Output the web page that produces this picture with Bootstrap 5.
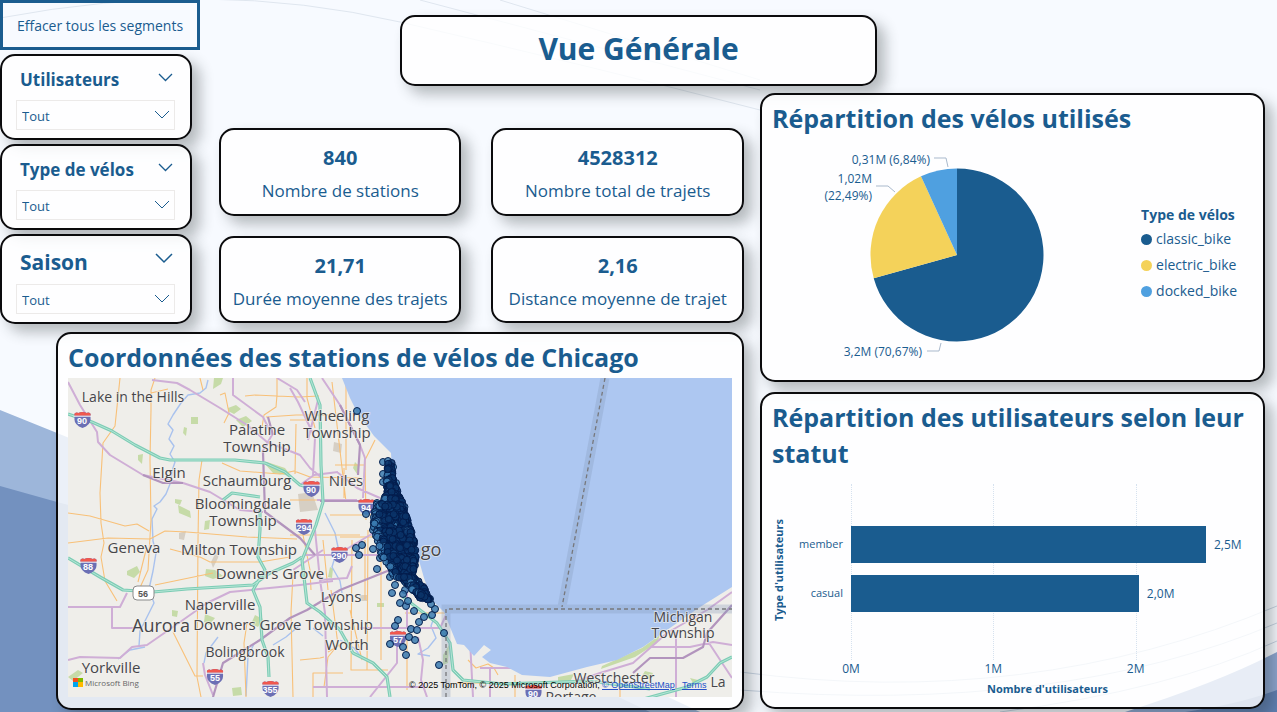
<!DOCTYPE html>
<html lang="fr">
<head>
<meta charset="utf-8">
<meta name="viewport" content="width=device-width, initial-scale=1">
<title>Vue Générale</title>
<link href="https://cdn.jsdelivr.net/npm/bootstrap@5.3.0/dist/css/bootstrap.min.css" rel="stylesheet">
<style>
  :root { --ink: #1a5c8f; }
  body { font-family: "Open Sans", "Noto Sans", sans-serif; color: var(--ink); background: #f7faff; }
  .backdrop { z-index: -1; }
  .dash { display: grid; min-height: 100vh;
    grid-template-columns: minmax(0, 200fr) minmax(0, 560fr) minmax(0, 517fr);
    grid-template-rows: 93px 234px 1fr; }
  .area-filters { grid-area: 1 / 1 / 3 / 2; }
  .area-title { grid-area: 1 / 2 / 2 / 4; display: grid; grid-template-columns: 200fr 477fr 400fr; padding: 15px 0 7px; }
  .area-title > h1 { grid-column: 2; font-size: 30px; }
  .area-kpi { grid-area: 2 / 2 / 3 / 3; display: grid; grid-template-columns: 242fr 252fr; gap: 20px 30px; padding: 35px 16px 4px 19px; }
  .area-map { grid-area: 3 / 1 / 4 / 3; padding: 5px 16px 2px 56px; }
  .area-charts { grid-area: 2 / 3 / 4 / 4; padding: 0 12px 3px 0; gap: 10px; }
  .panel { border: 2px solid #0b0b0d; border-radius: 15px; background: rgba(255,255,255,.8); box-shadow: 8px 8px 14px rgba(40,50,50,.32); }
  .panel h2 { font-size: 25px; line-height: 36px; }
  .btn-clear { --bs-btn-hover-color: var(--ink); --bs-btn-hover-border-color: var(--ink); --bs-btn-active-border-color: var(--ink);
    height: 50px; border: 3px solid var(--ink); border-radius: 0; color: var(--ink); font-size: 14px; padding: 0; }
  .slicer { margin-right: 8px; padding: 8px 15px 8px 14px; }
  .slicer label { font-size: 17px; line-height: 32px; }
  .slicer.season label { font-size: 21px; line-height: 36px; }
  .fold { border: 0; background: none; padding: 0 2px 6px 0; line-height: 0; color: var(--ink); }
  .slicer .form-select { height: 30px; border: 1px solid #eceae9; border-radius: 0; font-size: 13px; line-height: 22px; padding: 4px 24px 2px 5px; color: var(--ink); background-color: transparent;
    background-image: url("data:image/svg+xml,%3Csvg xmlns='http://www.w3.org/2000/svg' viewBox='0 0 16 16'%3E%3Cpath d='M1 4l7 7 7-7' fill='none' stroke='%231a5c8f'/%3E%3C/svg%3E"); background-position: right 4px center; background-size: 16px 16px; }
  .kpi { padding-top: 6px; }
  .kpi b { font-size: 20px; line-height: 28px; }
  .kpi span { font-size: 17px; line-height: 28px; padding-top: 5px; }
  .panel-chart { padding: 5px 10px; }
  .pie-panel { min-height: 289px; }
  .pie-row { padding-top: 3px; }
  .pie-svg { width: 332px; height: 220px; }
  .pie-svg text { font-size: 12px; fill: var(--ink); text-anchor: end; }
  .legend-box { font-size: 14px; line-height: 20px; margin-top: 14px; }
  .legend-box li { margin-bottom: 6px; }
  .swatch { width: 11px; height: 11px; border-radius: 50%; }
  .c-classic { background: #1a5c8f; } .c-electric { background: #f4d25a; } .c-docked { background: #4fa0e0; }
  .bar-chart { padding-top: 13px; }
  .ytitle { writing-mode: vertical-rl; transform: rotate(180deg); font-size: 11px; line-height: 14px; padding-top: 24px; }
  .cats { width: 65px; padding: 42px 8px 0 0; font-size: 11px; }
  .cats div, .bar-row { height: 37px; margin-bottom: 12px; }
  .plot { padding-top: 42px; height: 176px; }
  .gridline { top: 0; bottom: 0; border-left: 1px dotted #d6e2ef; }
  .bar-fill { background: var(--ink); }
  .bar-row, .ticks { font-size: 12px; }
  .ticks { height: 20px; }
  .ticks span { transform: translateX(-50%); }
  .xtitle { font-size: 11px; line-height: 18px; padding-left: 70px; }
  .geo { display: block; width: 100%; margin-top: 3px; }
  .geo .place { font-size: 15px; fill: #46464a; text-anchor: middle; stroke: #f4f2ee; stroke-width: 2px; stroke-opacity: .6; paint-order: stroke; }
  .geo .place .city { font-size: 18px; }
  .geo .place .minor { font-size: 14px; }
  .geo .credit { font: 9px "Liberation Sans", sans-serif; }
  .geo a text { fill: #2450c8; text-decoration: underline; }
  .geo .shield text { font: bold 9px "Liberation Sans", sans-serif; fill: #fff; text-anchor: middle; }
  .geo .dot { fill: #3a7ab0; fill-opacity: .85; stroke: #06224f; stroke-width: 1; }
  .geo .dot.dense { fill: #0b3468; stroke: #031c4c; }
</style>
</head>
<body>
<svg class="backdrop position-absolute top-0 start-0 w-100 h-100" viewBox="0 0 1277 712" preserveAspectRatio="none" aria-hidden="true">
  <path d="M0 410L57 433Q400 570 700 712H0Z" fill="#9db6da"/>
  <path d="M0 486L57 502Q400 590 650 712H0Z" fill="#7391bf"/>
  <path d="M1125 712Q1220 682 1277 652V712Z" fill="#8ca6d0"/>
  <path d="M1185 712Q1240 704 1277 690V712Z" fill="#5f7fb2"/>
  <g fill="none" stroke-width="1">
    <path stroke="#dfe6ef" d="M0 18Q210-22 400 22T760 110M420 0L760 90M500 0L760 80"/>
    <path stroke="#c6d2e2" d="M740 672Q1030 710 1277 606M740 690Q1060 715 1277 623M1000 712Q1170 690 1277 641"/>
  </g>
</svg>

<main class="dash">
  <aside class="area-filters d-flex flex-column">
    <button type="button" class="btn btn-clear w-100 mb-1 flex-shrink-0">Effacer tous les segments</button>
    <div class="d-flex flex-column gap-1">
      <section class="panel slicer">
        <div class="d-flex justify-content-between align-items-center ps-1"><label for="f-user" class="fw-bold">Utilisateurs</label>
          <button type="button" class="fold" aria-label="Replier"><svg width="15" height="15" viewBox="0 0 15 15"><path d="M1 4l6.500 6.500L14 4" fill="none" stroke="currentColor" stroke-width="1.300"/></svg></button></div>
        <select id="f-user" class="form-select mt-1"><option>Tout</option></select>
      </section>
      <section class="panel slicer">
        <div class="d-flex justify-content-between align-items-center ps-1"><label for="f-type" class="fw-bold">Type de vélos</label>
          <button type="button" class="fold" aria-label="Replier"><svg width="15" height="15" viewBox="0 0 15 15"><path d="M1 4l6.500 6.500L14 4" fill="none" stroke="currentColor" stroke-width="1.300"/></svg></button></div>
        <select id="f-type" class="form-select mt-1"><option>Tout</option></select>
      </section>
      <section class="panel slicer season">
        <div class="d-flex justify-content-between align-items-center ps-1"><label for="f-season" class="fw-bold">Saison</label>
          <button type="button" class="fold" aria-label="Replier"><svg width="18" height="18" viewBox="0 0 18 18"><path d="M1 4l8 8 8-8" fill="none" stroke="currentColor" stroke-width="1.500"/></svg></button></div>
        <select id="f-season" class="form-select mt-1"><option>Tout</option></select>
      </section>
    </div>
  </aside>

  <header class="area-title">
    <h1 class="panel fw-bold m-0 pb-1 d-flex align-items-center justify-content-center">Vue Générale</h1>
  </header>

  <section class="area-kpi text-center">
    <div class="panel kpi d-flex flex-column justify-content-center"><b>840</b><span>Nombre de stations</span></div>
    <div class="panel kpi d-flex flex-column justify-content-center"><b>4528312</b><span>Nombre total de trajets</span></div>
    <div class="panel kpi d-flex flex-column justify-content-center"><b>21,71</b><span>Durée moyenne des trajets</span></div>
    <div class="panel kpi d-flex flex-column justify-content-center"><b>2,16</b><span>Distance moyenne de trajet</span></div>
  </section>

  <div class="area-map d-flex">
    <section class="panel panel-chart flex-fill">
      <h2 class="fw-bold m-0">Coordonnées des stations de vélos de Chicago</h2>
      <svg class="geo" viewBox="68 378 664 319" role="img" aria-label="Carte des stations">
        <defs>
          <symbol id="sh" viewBox="0 0 19 18"><path d="M1 3Q3 1 5 2Q9.500 0 14 2Q16 1 18 3V9Q18 15 9.500 18Q1 15 1 9Z" fill="#6b6fb4"/><path d="M1 3Q3 1 5 2Q9.500 0 14 2Q16 1 18 3V5H1Z" fill="#f0584e"/><path d="M0 5.500H19" stroke="#fff" stroke-width="1"/></symbol>
        </defs>
        <rect x="68" y="378" width="664" height="319" fill="#efeeea"/>
        <g fill="#c6dba8">
          <path d="M228 408l8-3 5 4-7 5-6-3zM236 420l10-4 6 5-9 6zM191 417h7v7h-7zM184 427l3 1-1 8-3-3zM138 455l5-1-1 10-4-4zM175 499l7 1-2 5-5-2zM178 505l12 6 1 7-12-5zM205 521l5-1-1 9-5 1zM127 571l10-5 3 6-6 6-7-3zM206 569l9 1 8 6-10 3-8-3zM172 610l6 1-1 6-5-1zM205 614l10 4-6 7-5-3zM68 677l10-7 5 3-10 8zM232 688l9-1 1 8-9 1zM214 378h9l-2 6-8 5zM267 462l18 6 6 8-18-3-8-9zM355 462l4 4-2 8-4-6zM363 378l-12 3 3 6zM377 603h7v4h-7zM255 615l8 4-5 8-7-3zM330 567l3 2-1 9-4-1zM602 666l40-18 18-13-3 8-22 14-34 12zM645 671l8 2-3 6-8-3zM690 678l8 2-5 3zM558 677l16-3-4 8-12-1zM443 655l6-10-1 18-5 2z"/>
        </g>
        <g fill="#d6cfc4"><path d="M179 533l7-2-2 9-5-1zM298 494l14-2 6 18-18 2zM360 595h7v6h-7zM334 442l8 2-1 9-8-2zM220 548l-2 10-5 10-2-6 6-12z"/></g>
        <!-- rivers -->
        <g fill="none" stroke="#a9c2ee" stroke-width="1.400" stroke-linejoin="round">
          <path d="M208 380l-2 8-6 5-12 2-7 8-8 12-5 9 5 6-4 9 5 7-4 8 5 8-2 6-3 16-4 10-6 8-6 4 3 3-5 10 1 22 3 12-3 18-4 18 5 14-4 8-10 20-1 15"/>
          <path d="M145 647l-15 3-12 9M218 637l-12 16-2 10M268 634l-14 10-6 12-2 40M300 625l-14 12-13 8M325 513l10 20 3 14-6 20 8 14 2 12M436 612l-5 14 5 12-8 10-10 6 12 2M313 628l10 8M340 640l14 8 8 10"/>
        </g>
        <!-- secondary roads -->
        <g fill="none" stroke="#f8c078" stroke-width="1.100" stroke-linejoin="round">
          <path d="M120 378l-5 48-12 17-3 50 1 30 3 20-3 14 4 24 12 20M155 378l-4 12v20l-1 50 1 60-3 50-10 22M151 393l17-4M200 378l3 12M220 395l5-2 4 20-5 10M202 460l-3 20-1 60-1 137 4 20M277 378v18M245 396l10-1 44 2 20-1M277 395l-1 12-12 8-2 12M266 417l30-2h36M222 463l18 8 40 3 14-3 16 6 50 1M68 513l22 3 35 10 12-2 12 7M68 543l40-5 42 1 15-8 22 1 60 5 50 2M146 550l-8 32M155 585l58-12M170 549l30 8 10 5h50l30-5M173 632l22 44h8M290 420h28M296 424l-1 50M346 385v85M332 382l14 120M335 465h30M344 468v30M290 535h70M330 515h60M323 540l5 50M340 537h38M368 530l-1 140M365 540v60M331 590l7 55-10 12-4 30M300 660l20-2 4-1M352 540l-1 130h37M348 640l-20 12M313 697v-24h30M405 613h40M457 683h50M515 675v22M620 685v12M676 632v15M690 615l10 8M468 660l8 8 12-4 6 4 4 7M247 623l-3 20 2 54M293 575l-2 37 2 85"/>
          <path d="M307 378v20l8 30M290 500h50M375 440l-10 20 1 60M381 500v160M300 520l10 50 1 20M350 610l12 50M407 640v50"/>
        </g>
        <!-- highways -->
        <g fill="none" stroke="#cfaed6" stroke-width="2" stroke-linejoin="round">
          <path d="M68 382l12 23 17 27 1 10 12 13 33 20 40 8 27 9 30 18 23 2M152 380l25 3 13 7 30 18 27 17 20 17 33 13 10 13 12 10M233 378v17l30 22 9 18-10 17M277 378l20 12 8 12M290 388l8 14 17 36-2 37M322 378l18 27 20 40 5 13-2 40M337 472l20 16 23 10M300 485l14-10 24-3M68 607h52l7-14M112 607v21h28M68 660l12-3 40 1 12-11 15-2 26-18 34-24 23-11 70-7 33-4M303 555h74M317 500h40M315 530l2 20 3 30 5 33 2 84M360 628h80M313 687h110M397 630v33l-27 34M407 563v64M418 637l5 23-2 20 6 17M447 613l-7 15M203 663l2 12 8 20M340 560l5-10 30-18M470 640l3 57M480 668h60M732 592l-25 18-40 23-34 30-33 10-26 9M676 632v65M650 647h40l23-5 19 3M707 640l25 38M490 668v29"/>
          <path d="M318 400l-10 40M320 580l27-2 5-12M293 570l30-20"/>
        </g>
        <g fill="none" stroke="#b294bd" stroke-width="2.200" stroke-linejoin="round">
          <path d="M143 475l20 8h20M263 452l2 60 35 26 15 17M390 570l-50 20-33 20-17 8-30 22-37 23-10 34M268 417l5 18M340 405l20 40-2 30M732 605l-25 28-4 14-20 11h-33l-17 15M320 501h45"/>
        </g>
        <g fill="none" stroke="#7dccb5" stroke-width="3.200" stroke-linejoin="round">
          <path id="teal" d="M68 414l24 8 20 9 23 14 25 13 10 2h65l30 3 20 9 15 13 11 3M310 378l10 27 1 60 2 37-7 23-14 35 5 43 13 9 20 18 13 23 20 10 14 14 3 20M68 558l32 19 23 13 30 2 34-3 33-2 33-2 17-12 23-10 9-6M260 497l-28-4-9 7M260 510v20l-2 27 7 13-12 20 7 17 2 33 6 17 1 20M380 545l30 40M403 597l17 13 17 13 13 20 3 27 10 10 40 4 87-3 60 8M640 700l47-13 20-10 13-14 12-6"/>
        </g>
        <use href="#teal" fill="none" stroke="#b5e6d6" stroke-width="1"/>
        <!-- Lake Michigan -->
        <path d="M342 378L350 398 358 414 374 436 391 453 392 470 400 492 408 520 416 550 424 578 432 600 444 612 450 627 457 644 464 645 474 656 484 645 491 650 482 657 490 663 507 667 522 675 550 677 587 667 617 660 643 647 667 630 700 607 732 587V378Z" fill="#adc7f1"/>
        <g fill="none">
          <path d="M446 697V609H732M605 378L562 607" stroke="#8498b8" stroke-opacity=".3" stroke-width="9"/>
          <path d="M446 697V609H732M605 378L562 607" stroke="#77787c" stroke-width="1.300" stroke-dasharray="4 3"/>
        </g>
        <g class="shield">
          <use href="#sh" x="73" y="411" width="19" height="17"/><text x="82" y="424">90</text>
          <use href="#sh" x="302" y="480" width="19" height="17"/><text x="311" y="493">90</text>
          <use href="#sh" x="357" y="498" width="19" height="17"/><text x="366" y="511">94</text>
          <use href="#sh" x="294" y="518" width="20" height="17"/><text x="304" y="531">294</text>
          <use href="#sh" x="330" y="546" width="19" height="17"/><text x="339" y="559">290</text>
          <use href="#sh" x="79" y="557" width="19" height="17"/><text x="88" y="570">88</text>
          <use href="#sh" x="389" y="630" width="18" height="17"/><text x="398" y="643">57</text>
          <use href="#sh" x="206" y="668" width="18" height="17"/><text x="215" y="681">55</text>
          <use href="#sh" x="261" y="680" width="19" height="17"/><text x="270" y="693">355</text>
          <use href="#sh" x="524" y="684" width="19" height="17"/><text x="533" y="697">90</text>
          <rect x="133" y="586" width="21" height="14" rx="4" fill="#fff" stroke="#8a8a8a"/><text x="143" y="597" style="fill:#555">56</text>
        </g>
        <g class="place">
          <text class="minor" x="133" y="402">Lake in the Hills</text>
          <text x="337" y="421">Wheeling</text><text x="337" y="438">Township</text>
          <text x="257" y="435">Palatine</text><text x="257" y="452">Township</text>
          <text x="169" y="478">Elgin</text><text x="247" y="486">Schaumburg</text><text x="346" y="486">Niles</text>
          <text x="243" y="509">Bloomingdale</text><text x="243" y="526">Township</text>
          <text x="134" y="553">Geneva</text><text x="239" y="555">Milton Township</text>
          <text x="270" y="579">Downers Grove</text><text x="341" y="602">Lyons</text>
          <text x="220" y="610">Naperville</text><text class="city" x="161" y="632">Aurora</text>
          <text x="283" y="630">Downers Grove Township</text>
          <text class="minor" x="245" y="657">Bolingbrook</text><text x="347" y="650">Worth</text>
          <text x="111" y="673">Yorkville</text><text class="city" x="431" y="556">go</text>
          <text class="minor" x="683" y="622">Michigan</text><text class="minor" x="683" y="638">Township</text>
          <text class="minor" x="614" y="683">Westchester</text><text class="minor" x="571" y="702">Portage</text><text class="minor" x="718" y="687">La</text>
        </g>
        <g id="stations"></g>
        <g><path d="M73 678h5v4h-5z" fill="#f25022"/><path d="M78 678h5v4h-5z" fill="#7fba00"/><path d="M73 682h5v5h-5z" fill="#00a4ef"/><path d="M78 682h5v5h-5z" fill="#ffb900"/></g>
        <text x="85" y="686" font-size="8" fill="#666">Microsoft Bing</text>
        <g class="credit">
          <text x="409" y="688">© 2025 TomTom, © 2025 Microsoft Corporation,</text>
          <a href="#osm"><text x="602" y="688">© OpenStreetMap</text></a>
          <a href="#terms"><text x="682" y="688">Terms</text></a>
        </g>
      </svg>
    </section>
  </div>

  <div class="area-charts d-flex flex-column">
    <section class="panel panel-chart pie-panel">
      <h2 class="fw-bold m-0">Répartition des vélos utilisés</h2>
      <div class="pie-row d-flex align-items-center justify-content-between pe-3">
        <svg class="pie-svg" viewBox="772 139 332 220" role="img" aria-label="Répartition des vélos">
          <path d="M957 255V168.500A86.500 86.500 0 1 1 873.700 278.300Z" fill="#1a5c8f"/>
          <path d="M957 255L873.700 278.300A86.500 86.500 0 0 1 921 176.300Z" fill="#f4d25a"/>
          <path d="M957 255L921 176.300A86.500 86.500 0 0 1 957 168.500Z" fill="#4fa0e0"/>
          <path d="M934 158h12l2 9M876 186h12l7 6M927 351h12l2-8" fill="none" stroke="#a9b9cc"/>
          <text x="930" y="164">0,31M (6,84%)</text>
          <text x="872" y="183">1,02M</text><text x="872" y="200">(22,49%)</text>
          <text x="922" y="356">3,2M (70,67%)</text>
        </svg>
        <div class="legend-box">
          <strong>Type de vélos</strong>
          <ul class="list-unstyled m-0 pt-1">
            <li class="d-flex align-items-center gap-1"><span class="swatch c-classic"></span>classic_bike</li>
            <li class="d-flex align-items-center gap-1"><span class="swatch c-electric"></span>electric_bike</li>
            <li class="d-flex align-items-center gap-1"><span class="swatch c-docked"></span>docked_bike</li>
          </ul>
        </div>
      </div>
    </section>
    <section class="panel panel-chart flex-fill">
      <h2 class="fw-bold m-0">Répartition des utilisateurs selon leur statut</h2>
      <div class="bar-chart d-flex">
        <div class="ytitle fw-bold text-center">Type d'utilisateurs</div>
        <div class="cats text-end">
          <div class="d-flex align-items-center justify-content-end">member</div>
          <div class="d-flex align-items-center justify-content-end">casual</div>
        </div>
        <div class="flex-fill">
          <div class="plot position-relative">
            <span class="gridline position-absolute" style="left:0%"></span>
            <span class="gridline position-absolute" style="left:35.4%"></span>
            <span class="gridline position-absolute" style="left:70.8%"></span>
            <div class="bar-row d-flex align-items-center position-relative"><span class="bar-fill h-100" style="width:88.3%"></span><span class="ps-2">2,5M</span></div>
            <div class="bar-row d-flex align-items-center position-relative"><span class="bar-fill h-100" style="width:71.6%"></span><span class="ps-2">2,0M</span></div>
          </div>
          <div class="ticks position-relative">
            <span class="position-absolute" style="left:0%">0M</span>
            <span class="position-absolute" style="left:35.4%">1M</span>
            <span class="position-absolute" style="left:70.8%">2M</span>
          </div>
        </div>
      </div>
      <div class="xtitle fw-bold text-center">Nombre d'utilisateurs</div>
    </section>
  </div>
</main>

<script src="https://cdn.jsdelivr.net/npm/bootstrap@5.3.0/dist/js/bootstrap.bundle.min.js"></script>
<script>
  // Outlying stations, one pair per station
  const outer = [[357,411],[383,462],[388,461],[391,466],[393,467],[383,474],[383,482],[390,477],[396,483],[377,503],[366,514],[373,530],[356,548],[362,545],[359,555],[373,549],[380,558],[377,569],[390,577],[395,585],[392,593],[400,603],[406,606],[408,601],[414,611],[405,590],[403,594],[398,620],[395,626],[390,644],[403,647],[406,655],[409,637],[415,640],[411,629],[417,630],[419,622],[424,617],[432,615],[435,609],[431,604],[439,665],[444,633],[430,599]];
  // Left and right edge of the dense belt along the shore at each latitude
  const belt = [[463,386,392],[478,387,393],[485,386,395],[498,384,400],[504,377,404],[514,373,406],[530,374,411],[545,379,415],[556,380,416],[566,388,415],[576,394,412],[585,408,423],[592,414,426],[600,420,430]];
  let seed = 7;
  const rnd = () => (seed = (seed * 16807) % 2147483647) / 2147483647;
  const g = document.getElementById('stations');
  const add = (x, y, dense) => {
    const c = document.createElementNS('http://www.w3.org/2000/svg', 'circle');
    c.setAttribute('cx', x); c.setAttribute('cy', y); c.setAttribute('r', 3.5);
    c.setAttribute('class', dense ? 'dot dense' : 'dot'); g.appendChild(c);
  };
  outer.forEach(p => add(p[0], p[1], false));
  for (let i = 0; i < belt.length - 1; i++) {
    const [y0, a0, b0] = belt[i], [y1, a1, b1] = belt[i + 1];
    const n = (y1 - y0) * (b0 - a0 + b1 - a1) / 2 / 3;
    for (let k = 0; k < n; k++) {
      const t = rnd(), s = Math.pow(rnd(), .8), a = a0 + (a1 - a0) * t, b = b0 + (b1 - b0) * t;
      add(a + (b - a) * s, y0 + (y1 - y0) * t, s > .15 && rnd() > .06);
    }
  }
</script>
</body>
</html>
